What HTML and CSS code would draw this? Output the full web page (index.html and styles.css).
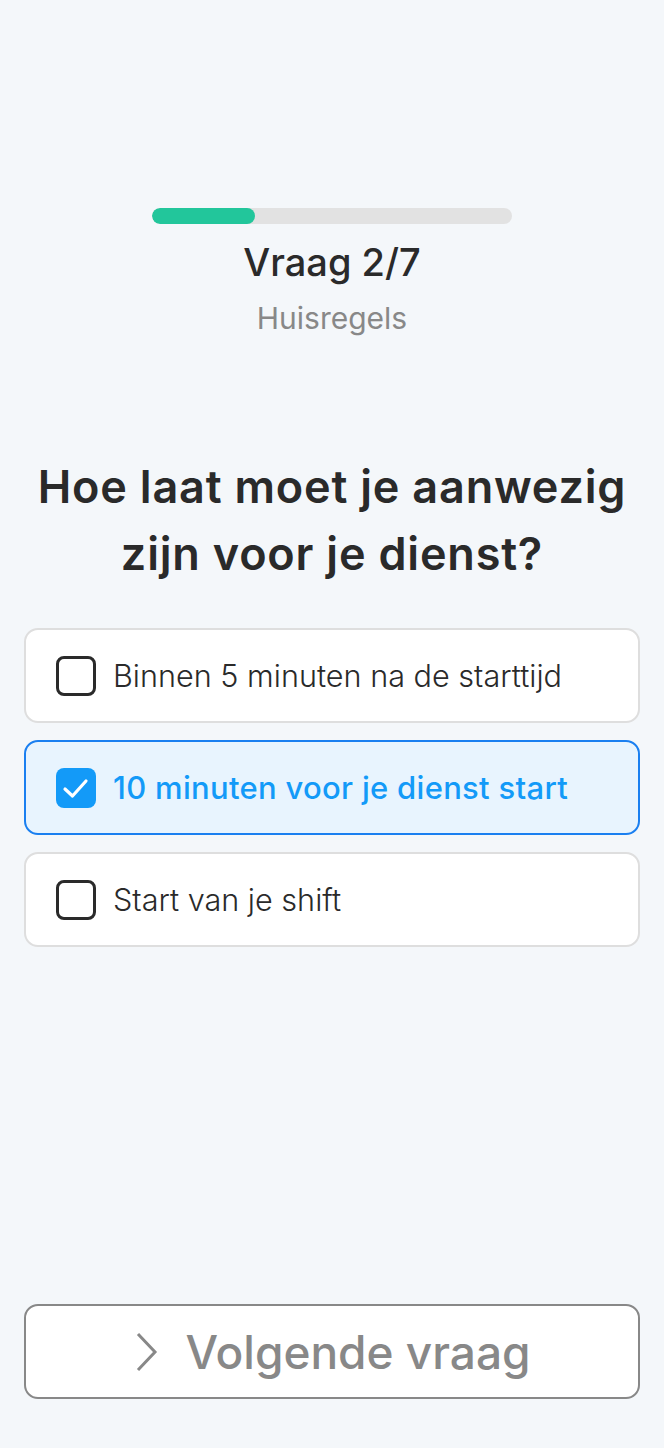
FILE: index.html
```html
<!DOCTYPE html>
<html lang="nl">
<head>
<meta charset="utf-8">
<title>Vraag 2/7</title>
<link rel="stylesheet" href="styles.css">
</head>
<body>
<main class="page">
  <header class="top">
    <div class="progress"><div class="progress-fill" style="width: 28.57%"></div></div>
    <div class="count">Vraag 2/7</div>
    <div class="category">Huisregels</div>
  </header>

  <h1 class="question">Hoe laat moet je aanwezig zijn voor je dienst?</h1>

  <ul class="options">
    <li class="option">
      <span class="box"></span>
      <span class="label">Binnen 5 minuten na de starttijd</span>
    </li>
    <li class="option selected">
      <span class="box checked">
        <svg viewBox="0 0 40 40" width="40" height="40"><path d="M9 21 L16.5 28 L30 13" fill="none" stroke="#fff" stroke-width="3.2" stroke-linecap="round" stroke-linejoin="round"/></svg>
      </span>
      <span class="label">10 minuten voor je dienst start</span>
    </li>
    <li class="option">
      <span class="box"></span>
      <span class="label">Start van je shift</span>
    </li>
  </ul>

  <div class="footer">
    <button class="next" type="button">
      <svg class="chev" viewBox="0 0 24 40" width="24" height="40"><path d="M3 2 L20 20 L3 38" fill="none" stroke="#888" stroke-width="3"/></svg>
      <span>Volgende vraag</span>
    </button>
  </div>
</main>
</body>
</html>
```

FILE: styles.css
```css
* { box-sizing: border-box; }
html, body { margin: 0; padding: 0; }
body {
  background: #f4f7fa;
  font-family: Inter, "Noto Sans", sans-serif;
  color: #2a2a2a;
}
.page {
  min-height: 1448px;
  display: flex;
  flex-direction: column;
  padding: 0 24px 49px;
}
.top {
  padding-top: 208px;
  display: flex;
  flex-direction: column;
  align-items: center;
}
.progress {
  width: 360px;
  height: 16px;
  border-radius: 8px;
  background: #e2e2e2;
  overflow: hidden;
}
.progress-fill {
  height: 100%;
  background: #22c69b;
  border-radius: 8px;
}
.count {
  margin-top: 16px;
  font-size: 38px;
  font-weight: 500;
  line-height: 44px;
  color: #2a2a2a;
}
.category {
  margin-top: 16px;
  font-size: 30px;
  line-height: 36px;
  color: #888;
}
.question {
  margin: 117px 0 0;
  text-align: center;
  font-size: 45px;
  font-weight: 600;
  letter-spacing: 0.8px;
  line-height: 67px;
  color: #2a2a2a;
  padding: 0;
}
.options {
  list-style: none;
  margin: 41px 0 0;
  padding: 0;
  display: flex;
  flex-direction: column;
  gap: 17px;
}
.option {
  height: 95px;
  background: #fff;
  border: 2px solid #dedede;
  border-radius: 14px;
  display: flex;
  align-items: center;
  padding-left: 30px;
  gap: 17px;
}
.option.selected {
  background: #e8f4fe;
  border-color: #1a7ff0;
}
.box {
  width: 40px;
  height: 40px;
  flex: none;
  border: 3px solid #2a2a2a;
  border-radius: 8px;
  display: flex;
}
.box.checked {
  border: none;
  background: #139af8;
}
.label {
  font-size: 30.6px;
  font-weight: 300;
  color: #2a2a2a;
}
.selected .label {
  color: #139af8;
  font-weight: 500;
  font-size: 31px;
  letter-spacing: 0.3px;
}
.footer {
  margin-top: auto;
}
.next {
  width: 100%;
  height: 95px;
  background: #fff;
  border: 2px solid #888;
  border-radius: 14px;
  display: flex;
  align-items: center;
  justify-content: center;
  gap: 26px;
  font-family: inherit;
  font-size: 46px;
  font-weight: 500;
  color: #888;
  padding: 0 0 0 2px;
}
.chev { flex: none; }
```
